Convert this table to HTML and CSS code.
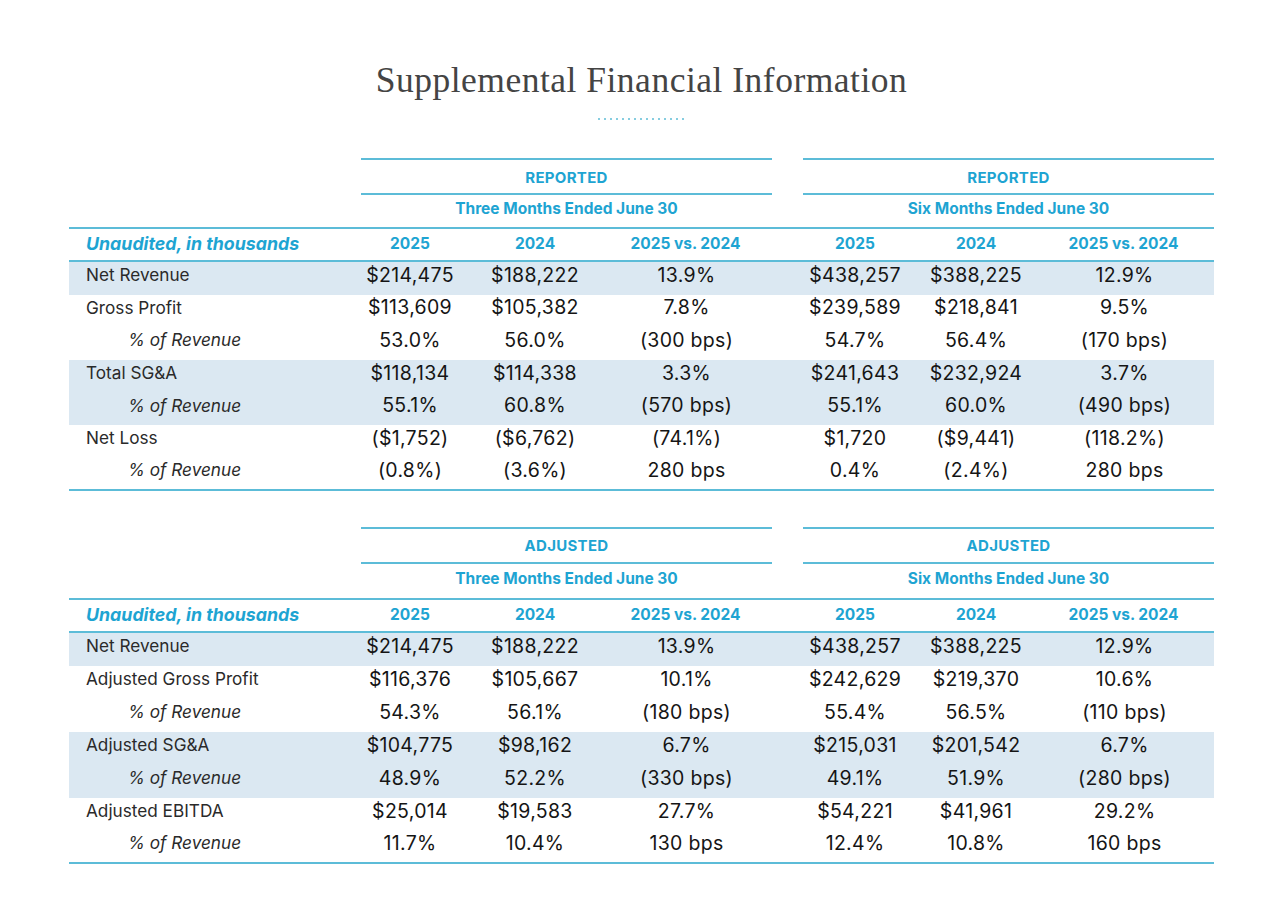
FILE: index.html
```html
<!DOCTYPE html>
<html lang="en">
<head>
<meta charset="utf-8">
<title>Supplemental Financial Information</title>
<link rel="stylesheet" href="styles.css">
</head>
<body>
<main class="page">
  <header class="page-head">
    <h1 class="title">Supplemental Financial Information</h1>
    <div class="dots"></div>
  </header>

  <table class="fin">
    <colgroup>
      <col class="c-label"><col class="c-a"><col class="c-b"><col class="c-c"><col class="c-gap"><col class="c-d"><col class="c-e"><col class="c-f">
    </colgroup>
    <thead>
      <tr class="grp">
        <th></th><th colspan="3" class="g">REPORTED</th><th class="gap"></th><th colspan="3" class="g">REPORTED</th>
      </tr>
      <tr class="per">
        <th></th><th colspan="3">Three Months Ended June 30</th><th class="gap"></th><th colspan="3">Six Months Ended June 30</th>
      </tr>
      <tr class="cols">
        <th class="lbl">Unaudited, in thousands</th><th>2025</th><th>2024</th><th class="vs">2025 vs. 2024</th><th class="gap"></th><th>2025</th><th>2024</th><th class="vs">2025 vs. 2024</th>
      </tr>
    </thead>
    <tbody>
      <tr class="shade"><td class="lbl">Net Revenue</td><td>$214,475</td><td>$188,222</td><td class="vs">13.9%</td><td class="gap"></td><td>$438,257</td><td>$388,225</td><td class="vs">12.9%</td></tr>
      <tr><td class="lbl">Gross Profit</td><td>$113,609</td><td>$105,382</td><td class="vs">7.8%</td><td class="gap"></td><td>$239,589</td><td>$218,841</td><td class="vs">9.5%</td></tr>
      <tr><td class="lbl sub">% of Revenue</td><td>53.0%</td><td>56.0%</td><td class="vs">(300 bps)</td><td class="gap"></td><td>54.7%</td><td>56.4%</td><td class="vs">(170 bps)</td></tr>
      <tr class="shade"><td class="lbl">Total SG&amp;A</td><td>$118,134</td><td>$114,338</td><td class="vs">3.3%</td><td class="gap"></td><td>$241,643</td><td>$232,924</td><td class="vs">3.7%</td></tr>
      <tr class="shade"><td class="lbl sub">% of Revenue</td><td>55.1%</td><td>60.8%</td><td class="vs">(570 bps)</td><td class="gap"></td><td>55.1%</td><td>60.0%</td><td class="vs">(490 bps)</td></tr>
      <tr><td class="lbl">Net Loss</td><td>($1,752)</td><td>($6,762)</td><td class="vs">(74.1%)</td><td class="gap"></td><td>$1,720</td><td>($9,441)</td><td class="vs">(118.2%)</td></tr>
      <tr class="last"><td class="lbl sub">% of Revenue</td><td>(0.8%)</td><td>(3.6%)</td><td class="vs">280 bps</td><td class="gap"></td><td>0.4%</td><td>(2.4%)</td><td class="vs">280 bps</td></tr>
    </tbody>
  </table>

  <table class="fin second">
    <colgroup>
      <col class="c-label"><col class="c-a"><col class="c-b"><col class="c-c"><col class="c-gap"><col class="c-d"><col class="c-e"><col class="c-f">
    </colgroup>
    <thead>
      <tr class="grp">
        <th></th><th colspan="3" class="g">ADJUSTED</th><th class="gap"></th><th colspan="3" class="g">ADJUSTED</th>
      </tr>
      <tr class="per">
        <th></th><th colspan="3">Three Months Ended June 30</th><th class="gap"></th><th colspan="3">Six Months Ended June 30</th>
      </tr>
      <tr class="cols">
        <th class="lbl">Unaudited, in thousands</th><th>2025</th><th>2024</th><th class="vs">2025 vs. 2024</th><th class="gap"></th><th>2025</th><th>2024</th><th class="vs">2025 vs. 2024</th>
      </tr>
    </thead>
    <tbody>
      <tr class="shade"><td class="lbl">Net Revenue</td><td>$214,475</td><td>$188,222</td><td class="vs">13.9%</td><td class="gap"></td><td>$438,257</td><td>$388,225</td><td class="vs">12.9%</td></tr>
      <tr><td class="lbl">Adjusted Gross Profit</td><td>$116,376</td><td>$105,667</td><td class="vs">10.1%</td><td class="gap"></td><td>$242,629</td><td>$219,370</td><td class="vs">10.6%</td></tr>
      <tr><td class="lbl sub">% of Revenue</td><td>54.3%</td><td>56.1%</td><td class="vs">(180 bps)</td><td class="gap"></td><td>55.4%</td><td>56.5%</td><td class="vs">(110 bps)</td></tr>
      <tr class="shade"><td class="lbl">Adjusted SG&amp;A</td><td>$104,775</td><td>$98,162</td><td class="vs">6.7%</td><td class="gap"></td><td>$215,031</td><td>$201,542</td><td class="vs">6.7%</td></tr>
      <tr class="shade"><td class="lbl sub">% of Revenue</td><td>48.9%</td><td>52.2%</td><td class="vs">(330 bps)</td><td class="gap"></td><td>49.1%</td><td>51.9%</td><td class="vs">(280 bps)</td></tr>
      <tr><td class="lbl">Adjusted EBITDA</td><td>$25,014</td><td>$19,583</td><td class="vs">27.7%</td><td class="gap"></td><td>$54,221</td><td>$41,961</td><td class="vs">29.2%</td></tr>
      <tr class="last"><td class="lbl sub">% of Revenue</td><td>11.7%</td><td>10.4%</td><td class="vs">130 bps</td><td class="gap"></td><td>12.4%</td><td>10.8%</td><td class="vs">160 bps</td></tr>
    </tbody>
  </table>
</main>
</body>
</html>
```

FILE: styles.css
```css
html, body {
  margin: 0;
  padding: 0;
  background: #ffffff;
}

body {
  font-family: Inter, "Liberation Sans", sans-serif;
  color: #1a1a1a;
}

.page {
  width: 1145px;
  margin-left: 69px;
  padding-top: 60px;
}

.page-head {
  display: flex;
  flex-direction: column;
  align-items: center;
}

.title {
  margin: 0;
  font-family: "Liberation Serif", "DejaVu Serif", serif;
  font-weight: normal;
  font-size: 35.5px;
  line-height: 40px;
  color: #444444;
  letter-spacing: 0.5px;
}

.dots {
  margin-top: 18px;
  width: 88px;
  height: 2px;
  background: repeating-linear-gradient(to right, #86cde0 0 2px, transparent 2px 6px);
}

.fin {
  margin-top: 38px;
  width: 1145px;
  border-collapse: separate;
  border-spacing: 0;
  table-layout: fixed;
}

.fin.second {
  margin-top: 36px;
}

.c-label { width: 292px; }
.c-a { width: 98px; }
.c-b { width: 152px; }
.c-c { width: 161px; }
.c-gap { width: 31px; }
.c-d { width: 104px; }
.c-e { width: 138px; }
.c-f { width: 169px; }

.fin th,
.fin td {
  padding: 0;
  text-align: center;
  vertical-align: middle;
  white-space: nowrap;
}

.fin thead th {
  color: #1ea4d2;
  font-weight: 700;
}

.grp {
  height: 37px;
}

.grp th {
  font-size: 15px;
  letter-spacing: 0.3px;
  padding-top: 1px;
}

.grp .g {
  border-top: 2px solid #5cbcd8;
  border-bottom: 2px solid #5cbcd8;
}

.per {
  height: 32px;
}

.second .per {
  height: 34px;
}

.per th {
  font-size: 15.5px;
  padding-bottom: 5px;
}

.cols {
  height: 35px;
}

.cols th {
  font-size: 15.5px;
  border-top: 2px solid #5cbcd8;
  border-bottom: 2px solid #5cbcd8;
  padding-bottom: 2px;
}

.cols th.lbl {
  text-align: left;
  padding-left: 17px;
  font-style: italic;
  font-size: 17.8px;
}

.fin .vs {
  padding-right: 12px;
}

.fin td.vs {
  padding-right: 10px;
}

.fin tbody tr {
  height: 32.6px;
}

.second tbody tr {
  height: 33px;
}

.fin tbody td {
  font-size: 19.5px;
  letter-spacing: 0.3px;
  color: #151515;
  padding-bottom: 7px;
}

.fin tbody td.lbl {
  text-align: left;
  padding-left: 17px;
  font-size: 17.2px;
  letter-spacing: 0;
  color: #2a2a2a;
}

.fin tbody td.lbl.sub {
  padding-left: 59px;
  font-style: italic;
}

.fin tbody tr.shade td {
  background: #dbe8f2;
}

.fin tbody tr.last td {
  border-bottom: 2px solid #5cbcd8;
}
```
